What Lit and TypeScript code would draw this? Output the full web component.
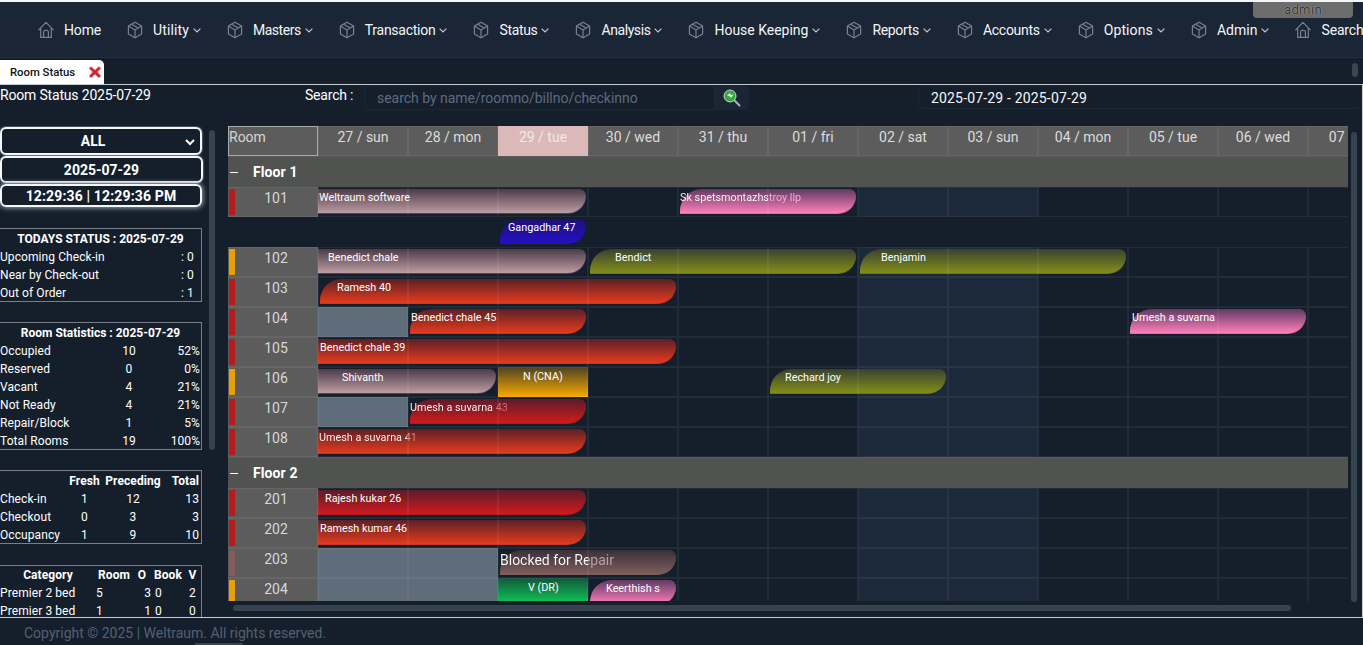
import { LitElement, html, css, svg } from "lit";
import { customElement } from "lit/decorators.js";

const boxIcon = svg`<svg class="ic" viewBox="0 0 16 18" width="16" height="18" fill="none" stroke="#77818f" stroke-width="1.2" stroke-linejoin="round" stroke-linecap="round"><path d="M8 1.2 14.6 5v8L8 16.8 1.4 13V5Z"/><path d="M1.8 5.2 8 9l6.2-3.8M8 9v7.6M4.6 3.2l6.6 3.9"/></svg>`;
const homeIcon = svg`<svg class="ic" viewBox="0 0 16 18" width="16" height="18" fill="none" stroke="#77818f" stroke-width="1.2" stroke-linejoin="round" stroke-linecap="round"><path d="M.7 8.8 8 1.4l7.3 7.4M2.7 7.2v9.2h10.6V7.2"/><path d="M5.6 16.2v-5.2a1.6 1.6 0 0 1 1.6-1.6h1.6a1.6 1.6 0 0 1 1.6 1.6v5.2"/></svg>`;
const chev = svg`<svg class="chev" viewBox="0 0 8 5" width="8" height="5" fill="none" stroke="#c6ccd4" stroke-width="1.1"><path d="M.6.7 4 4 7.4.7"/></svg>`;

// label, has chevron, width correction in px (the reference font has other word widths)
const nav: [string, boolean, number][] = [
  ["Home", false, 0], ["Utility", true, 2], ["Masters", true, -2], ["Transaction", true, -1], ["Status", true, -1], ["Analysis", true, -2],
  ["House Keeping", true, 2], ["Reports", true, -1], ["Accounts", true, -1], ["Options", true, 2], ["Admin", true, 1], ["Search", false, 0],
];
const days = ["27 / sun", "28 / mon", "29 / tue", "30 / wed", "31 / thu", "01 / fri", "02 / sat", "03 / sun", "04 / mon", "05 / tue", "06 / wed", "07 / thu"];

type Bar = { t: string; x0: number; x1: number; k: string; start?: boolean; tx: number; cut?: number; dim?: string; rect?: boolean; big?: boolean };
type Row = { n: string; s?: string; past?: number; bars: Bar[]; spacer?: boolean; floor?: boolean };

const rows: Row[] = [
  { n: "Floor 1", floor: true, bars: [] },
  { n: "101", s: "r", bars: [
    { t: "Weltraum software", x0: 318, x1: 586, k: "due", tx: 319 },
    { t: "Sk spetsmontazhstroy llp", x0: 680, x1: 856, k: "pink", start: true, tx: 680, cut: 88, dim: "#f6b4d6" },
  ] },
  { n: "", spacer: true, bars: [{ t: "Gangadhar 47", x0: 500, x1: 586, k: "blue", start: true, tx: 508 }] },
  { n: "102", s: "a", bars: [
    { t: "Benedict chale", x0: 318, x1: 586, k: "due", tx: 328 },
    { t: "Bendict", x0: 590, x1: 856, k: "olive", start: true, tx: 615 },
    { t: "Benjamin", x0: 860, x1: 1126, k: "olive", start: true, tx: 881 },
  ] },
  { n: "103", s: "r", bars: [{ t: "Ramesh 40", x0: 320, x1: 676, k: "orange", start: true, tx: 337 }] },
  { n: "104", s: "r", past: 1, bars: [
    { t: "Benedict chale 45", x0: 410, x1: 586, k: "orange", start: true, tx: 411 },
    { t: "Umesh a suvarna", x0: 1130, x1: 1306, k: "pink", start: true, tx: 1132 },
  ] },
  { n: "105", s: "r", bars: [{ t: "Benedict chale 39", x0: 318, x1: 676, k: "orange", tx: 320 }] },
  { n: "106", s: "a", bars: [
    { t: "Shivanth", x0: 318, x1: 496, k: "due", tx: 342 },
    { t: "N (CNA)", x0: 498, x1: 588, k: "gold", rect: true, tx: 523 },
    { t: "Rechard joy", x0: 770, x1: 946, k: "olive", start: true, tx: 785 },
  ] },
  { n: "107", s: "r", past: 1, bars: [{ t: "Umesh a suvarna 43", x0: 410, x1: 586, k: "red", start: true, tx: 410, cut: 86, dim: "#dd6a7c" }] },
  { n: "108", s: "r", bars: [{ t: "Umesh a suvarna 41", x0: 318, x1: 586, k: "orange", tx: 319, cut: 88, dim: "#ea8a70" }] },
  { n: "Floor 2", floor: true, bars: [] },
  { n: "201", s: "r", bars: [{ t: "Rajesh kukar 26", x0: 318, x1: 586, k: "red", tx: 325 }] },
  { n: "202", s: "r", bars: [{ t: "Ramesh kumar 46", x0: 318, x1: 586, k: "orange", tx: 320 }] },
  { n: "203", s: "m", past: 2, bars: [{ t: "Blocked for Repair", x0: 500, x1: 676, k: "repair", start: true, tx: 500, cut: 88, dim: "#bca4a4", big: true }] },
  { n: "204", s: "a", past: 2, bars: [
    { t: "V (DR)", x0: 498, x1: 588, k: "green", rect: true, tx: 528 },
    { t: "Keerthish s", x0: 590, x1: 676, k: "pink", start: true, tx: 606 },
  ] },
];

@customElement("app-root")
export class AppRoot extends LitElement {
  static styles = css`
    :host { display: block; height: 645px; overflow: hidden; background: #151f2c; color: #fff; font-family: Roboto, "Open Sans", sans-serif; font-size: 12px; }
    * { box-sizing: border-box; }
    .page { height: 645px; display: flex; flex-direction: column; position: relative; overflow: hidden; border-top: 2px solid #f4f5f6; }
    .admin { position: absolute; top: -2px; left: 1253px; width: 100px; height: 18px; background: #6c6c6c; border-radius: 0 0 4px 4px; color: #2f2f2f; text-shadow: 0 0 1px #ddd; font-size: 13px; line-height: 20px; text-align: center; letter-spacing: .4px; }
    header { height: 56px; flex: none; background: #1a2535; border-bottom: 1px solid #232f40; display: flex; align-items: center; gap: 26px; padding: 0 0 0 38px; overflow: hidden; white-space: nowrap; font-size: 14px; color: #f3f5f7; }
    .ni { display: flex; align-items: center; flex: none; }
    .ic { margin-right: 10px; flex: none; }
    .chev { margin-left: 4px; margin-top: 2px; }
    .tabs { height: 26px; flex: none; display: flex; align-items: flex-end; position: relative; }
    .tab { width: 104px; height: 24px; background: #fff; border-radius: 0 5px 0 0; color: #111; font-weight: 500; font-size: 11.3px; display: flex; align-items: center; justify-content: space-between; padding: 0 2px 0 10px; }
    .otherthumb { position: absolute; left: 1352px; top: 5px; width: 6px; height: 14px; background: #3b4653; border-radius: 3px; }
    .panel { height: 534px; flex: none; border: 1px solid #c9cccf; border-width: 1px 1px 1px 0; display: flex; flex-direction: column; overflow: hidden; }
    .top { height: 41px; flex: none; display: flex; align-items: flex-start; font-size: 14px; }
    .title { width: 305px; flex: none; line-height: 20px; letter-spacing: -.18px; }
    .slabel { width: 59px; flex: none; line-height: 20px; letter-spacing: -.2px; }
    .sinput { width: 351px; height: 24px; margin-top: 1px; flex: none; border: 1px solid #1c2736; border-radius: 4px 0 0 4px; color: #5d6b7e; padding: 0 12px; line-height: 23px; font-size: 14px; letter-spacing: -.03px; }
    .sbtn { width: 34px; height: 24px; margin-top: 1px; flex: none; background: #1a2535; border-radius: 0 4px 4px 0; display: flex; align-items: center; justify-content: center; }
    .drange { margin: 1px 0 0 169px; flex: 1; height: 23px; border: 1px solid #1c2736; border-radius: 4px; padding: 0 12px; line-height: 23px; color: #f5f6f8; letter-spacing: .17px; }
    .body { flex: 1; display: flex; min-height: 0; }
    .side { width: 228px; flex: none; display: flex; overflow: hidden; }
    .sidecol { width: 202px; flex: none; padding-top: 1px; }
    .sb { width: 6px; height: 320px; margin: 4px 0 0 7px; background: #37424f; border-radius: 3px; flex: none; }
    .ctl { border: 2px solid #f4f6f8; border-radius: 6px; display: flex; align-items: center; justify-content: center; font-weight: 700; position: relative; box-shadow: 0 0 2px #cfd4da; }
    .c1 { height: 28px; font-size: 14px; padding-right: 16px; }
    .c1 svg { position: absolute; right: 5px; top: 10px; }
    .c2 { height: 27px; margin-top: 1px; font-size: 14px; width: 203px; }
    .c3 { height: 23px; margin-top: 1px; font-size: 14px; letter-spacing: .15px; box-shadow: 0 0 5px 1px #9aa2ac; }
    .box { border: 1px solid #7a7f85; border-left: 0; margin-top: 20px; line-height: 18px; padding-top: 1px; height: 74px; }
    .tall { height: 128px; }
    .first { margin-top: 21px; }
    .last { margin-top: 21px; height: 90px; padding-top: 0; }
    .ttl { font-weight: 700; text-align: center; }
    .g { display: grid; letter-spacing: .08px; }
    .g1 { grid-template-columns: 1fr 20px; }
    .g2 { grid-template-columns: 118px 22px 1fr; }
    .g3 { grid-template-columns: 66px 37px 60px 1fr; }
    .g4 { grid-template-columns: 96px 36px 20px 32px 1fr; }
    .r { text-align: right; padding-right: 1px; }
    .tot { padding-right: 2px; }
    .cn { text-align: center; }
    .b { font-weight: 700; }
    .gridwrap { width: 1120px; flex: none; display: flex; flex-direction: column; }
    .clip { height: 475px; overflow: hidden; }
    .sched { width: 1170px; }
    .hrow { display: flex; height: 30px; }
    .hroom { width: 90px; border: 1px solid #a9abad; background: #5c5c5c; color: #d5d5d5; font-size: 14px; line-height: 20px; padding-left: 0; flex: none; }
    .hd { width: 90px; flex: none; background: #5c5c5c; border: 1px solid #666; color: #dcdcdc; font-size: 14px; line-height: 20px; text-align: center; }
    .today { background: #dbb9b9; border-color: #dbb9b9; color: #efe9e9; }
    .floor { height: 31px; background: #515351; display: flex; align-items: center; font-weight: 700; font-size: 14px; letter-spacing: .1px; border-top: 1px solid #5a5c5a; }
    .dash { width: 8px; height: 1px; background: #fff; margin: 0 15px 0 2px; }
    .row { height: 30px; position: relative; display: flex; }
    .room { width: 90px; flex: none; background: #5c5c5c; border: 1px solid #666; border-left: 0; color: #d8d8d8; font-size: 14px; display: flex; line-height: 21px; }
    .strip { width: 6px; margin: 1px 0 1px 1px; flex: none; }
    .s-r { background: #b71c1c; } .s-a { background: #e89f05; } .s-m { background: #845a5a; }
    .num { flex: 1; text-align: center; }
    .cell { width: 90px; flex: none; background: #151f2c; }
    .we { background: #1c293a; }
    .pastc { background: #5f6c7a; }
    .bar { position: absolute; top: 2px; height: 25px; border-radius: 0 8px 22px 0; border-bottom: 1px solid var(--e); overflow: visible; }
    .st { border-radius: 26px 8px 22px 0; }
    .rect { top: 0; height: 30px; border-radius: 0; border: 0; }
    .bt { position: absolute; top: 0; white-space: nowrap; font-size: 10.8px; line-height: 17px; color: #fff; }
    .bigt { font-size: 14px; top: 0; line-height: 20px; }
    .rect .bt { top: 1px; }
    .lines { position: absolute; left: 90px; top: 0; bottom: 0; display: flex; }
    .ln { width: 90px; flex: none; border: 1px solid rgba(255, 255, 255, .06); }
    .due { background: linear-gradient(#4c3b49, #bd9ca1); --e: #4c3f78; }
    .pink { background: linear-gradient(#5f3a62, #ff7fbb); --e: #e06aa8; }
    .blue { background: linear-gradient(#1d1176, #2410c4); --e: #2410c4; }
    .olive { background: linear-gradient(#3a4130, #828e1a); --e: #6d7618; }
    .orange { background: linear-gradient(#5c2027, #e43b1d); --e: #c9351e; }
    .red { background: linear-gradient(#5c1c2a, #d01a1d); --e: #b5191d; }
    .gold { background: linear-gradient(#4d4222, #fbaa00); }
    .green { background: linear-gradient(#12563c, #0fdc5a); }
    .repair { background: linear-gradient(#3a3039, #7e5d5e); --e: #7e5d5e; }
    .hs { height: 6px; width: 1058px; margin: 4px 0 0 5px; background: #37424f; border-radius: 3px; flex: none; }
    .vs { position: absolute; left: 1351px; top: 130px; width: 6px; height: 470px; background: #37424f; border-radius: 3px; }
    footer { flex: 1; padding: 6px 0 0 24px; color: #536072; font-size: 14px; line-height: 18px; position: relative; }
    .bt2 { position: absolute; left: 195px; bottom: 0; width: 48px; height: 2px; background: #37424f; }
  `;

  private renderBar(b: Bar) {
    const style = `left:${b.x0 - 228}px;width:${b.x1 - b.x0}px`;
    const ts = `left:${b.tx - b.x0}px` + (b.cut ? `;color:transparent;background:linear-gradient(90deg,#fff ${b.cut}px,${b.dim} ${b.cut}px);-webkit-background-clip:text;background-clip:text` : "");
    const cls = `bar ${b.k}${b.start ? " st" : ""}${b.rect ? " rect" : ""}`;
    return html`<div class=${cls} style=${style}><span class="bt${b.big ? " bigt" : ""}" style=${ts}>${b.t}</span></div>`;
  }

  private renderRow(r: Row) {
    if (r.floor) return html`<div class="floor"><span class="dash"></span>${r.n}</div>`;
    if (r.spacer) return html`<div class="row">${r.bars.map((b) => this.renderBar(b))}</div>`;
    return html`<div class="row">
      <div class="room"><span class="strip s-${r.s}"></span><span class="num">${r.n}</span></div>
      ${days.map((_, i) => html`<div class="cell ${i === 6 || i === 7 ? "we" : ""} ${i < (r.past || 0) ? "pastc" : ""}"></div>`)}
      ${r.bars.map((b) => this.renderBar(b))}
      <div class="lines">${days.map(() => html`<div class="ln"></div>`)}</div>
    </div>`;
  }

  render() {
    return html`<div class="page">
      <div class="admin">admin</div>
      <header>
        ${nav.map(([t, c, dw], i) => html`<div class="ni">${i === 0 || i === 11 ? homeIcon : boxIcon}<span style=${`letter-spacing:${(-0.17 + dw / t.length).toFixed(3)}px`}>${t}</span>${c ? chev : ""}</div>`)}
      </header>
      <div class="tabs">
        <div class="tab">Room Status
          <svg viewBox="0 0 14 14" width="14" height="14"><path d="M3 1.5 7 5l4-3.5L13 3.5 9.5 7 13 11l-2 2-4-3.5L3 13l-2-2 3.5-4L1 3.5Z" fill="#d3232c" stroke="#e9a3a6" stroke-width=".7"/></svg>
        </div>
        <div class="otherthumb"></div>
      </div>
      <div class="panel">
        <div class="top">
          <div class="title">Room Status 2025-07-29</div>
          <div class="slabel">Search :</div>
          <div class="sinput">search by name/roomno/billno/checkinno</div>
          <div class="sbtn"><svg viewBox="0 0 18 18" width="18" height="18"><path d="M10.5 10.5 16.5 16.5" stroke="#aeb4b8" stroke-width="2" stroke-linecap="round"/><circle cx="7" cy="7" r="6" fill="#3aa53a" stroke="#c9d6c6" stroke-width="1"/><path d="M4 6.5 7 4l1 2 2.5-.5L8 9 7 7.5Z" fill="#e4f7dc"/></svg></div>
          <div class="drange">2025-07-29 - 2025-07-29</div>
        </div>
        <div class="body">
          <div class="side">
            <div class="sidecol">
              <div class="ctl c1">ALL<svg viewBox="0 0 10 7" width="10" height="7" fill="none" stroke="#fff" stroke-width="2"><path d="M1 1l4 4 4-4"/></svg></div>
              <div class="ctl c2">2025-07-29</div>
              <div class="ctl c3">12:29:36 | 12:29:36 PM</div>
              <div class="box first">
                <div class="ttl">TODAYS STATUS : 2025-07-29</div>
                <div class="g g1"><span>Upcoming Check-in</span><span>: 0</span><span>Near by Check-out</span><span>: 0</span><span>Out of Order</span><span>: 1</span></div>
              </div>
              <div class="box tall">
                <div class="ttl">Room Statistics : 2025-07-29</div>
                <div class="g g2">
                  ${[["Occupied", "10", "52%"], ["Reserved", "0", "0%"], ["Vacant", "4", "21%"], ["Not Ready", "4", "21%"], ["Repair/Block", "1", "5%"], ["Total Rooms", "19", "100%"]].map(([a, b, c]) => html`<span>${a}</span><span class="cn">${b}</span><span class="r">${c}</span>`)}
                </div>
              </div>
              <div class="box">
                <div class="g g3">
                  <span></span><span class="b cn">Fresh</span><span class="b cn">Preceding</span><span class="b r tot">Total</span>
                  ${[["Check-in", "1", "12", "13"], ["Checkout", "0", "3", "3"], ["Occupancy", "1", "9", "10"]].map(([a, b, c, d]) => html`<span>${a}</span><span class="cn">${b}</span><span class="cn">${c}</span><span class="r tot">${d}</span>`)}
                </div>
              </div>
              <div class="box last">
                <div class="g g4">
                  <span class="b cn">Category</span><span class="b cn">Room</span><span class="b cn">O</span><span class="b cn">Book</span><span class="b cn">V</span>
                  ${[["Premier 2 bed", "5", "3", "0", "2"], ["Premier 3 bed", "1", "1", "0", "0"]].map((v) => html`<span>${v[0]}</span><span>${v[1]}</span><span class="r">${v[2]}</span><span>&nbsp;${v[3]}</span><span class="cn">${v[4]}</span>`)}
                </div>
              </div>
            </div>
            <div class="sb"></div>
          </div>
          <div class="gridwrap">
            <div class="clip"><div class="sched">
              <div class="hrow">
                <div class="hroom">Room</div>
                ${days.map((d, i) => html`<div class="hd ${i === 2 ? "today" : ""}">${d}</div>`)}
              </div>
              ${rows.map((r) => this.renderRow(r))}
            </div></div>
            <div class="hs"></div>
          </div>
        </div>
      </div>
      <div class="vs"></div>
      <footer>Copyright © 2025 | Weltraum. All rights reserved.<span class="bt2"></span></footer>
    </div>`;
  }
}
